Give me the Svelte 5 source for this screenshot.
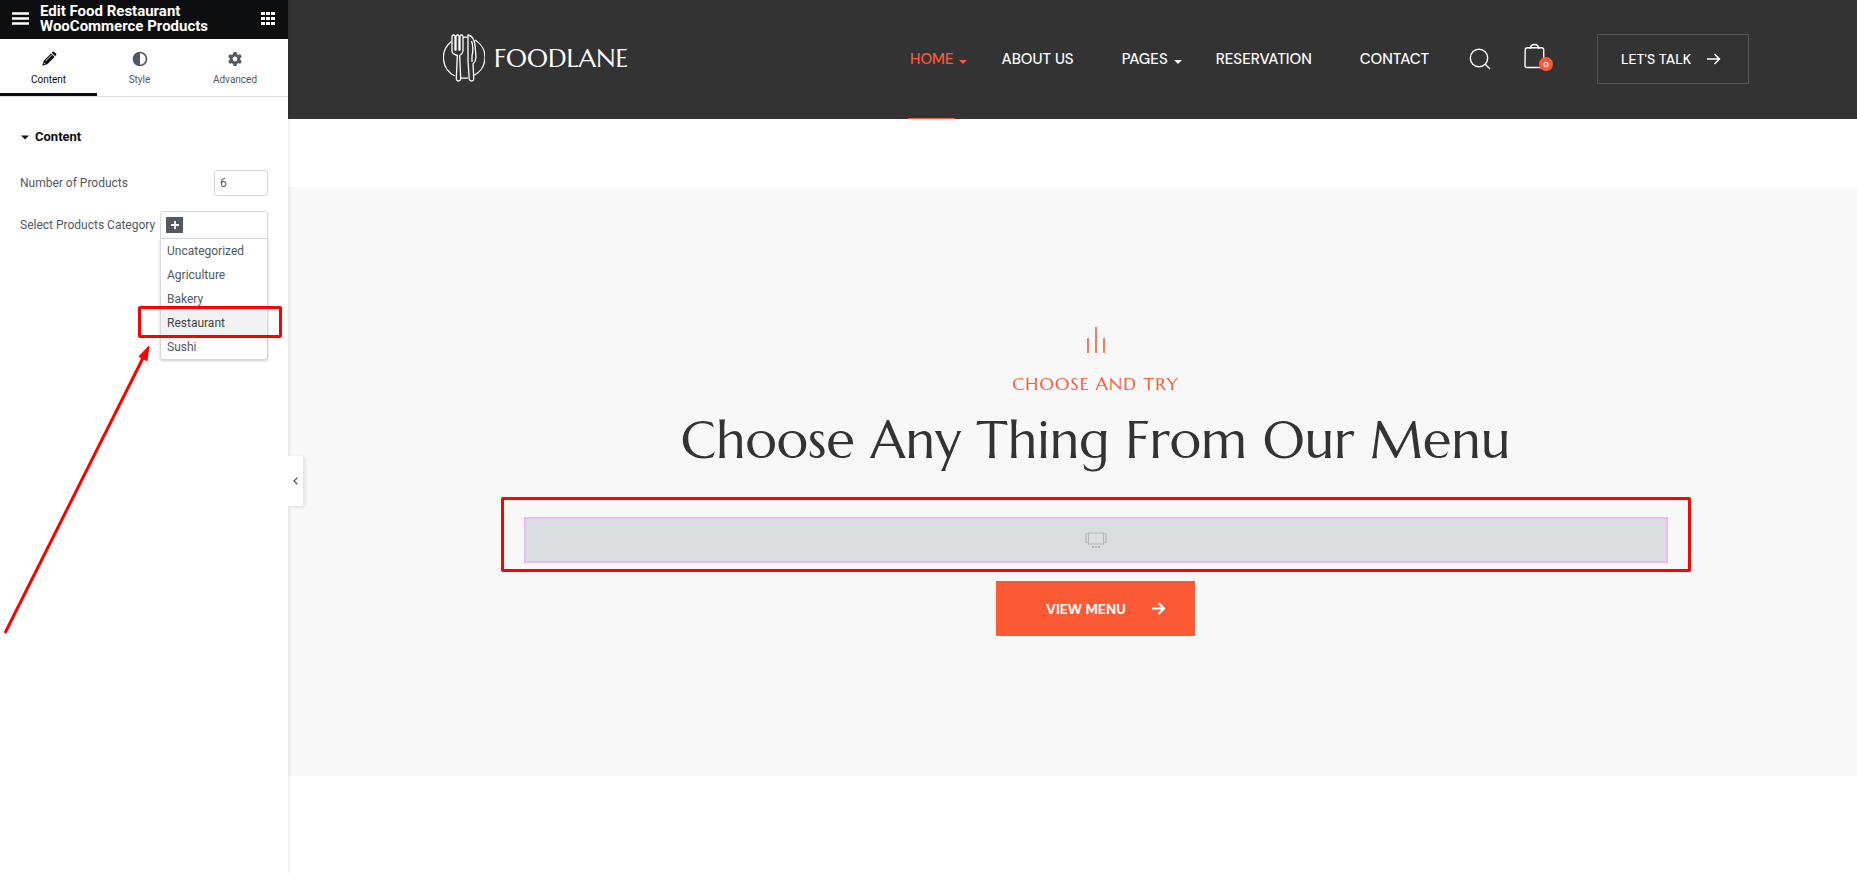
<script>
  const options = ['Uncategorized', 'Agriculture', 'Bakery', 'Restaurant', 'Sushi'];
  const links = [
    { label: 'HOME', menu: true, active: true },
    { label: 'ABOUT US' },
    { label: 'PAGES', menu: true },
    { label: 'RESERVATION' },
    { label: 'CONTACT' }
  ];
  let count = $state(6);
  let query = $state('');
  let chosen = $state('Restaurant');
</script>

<div class="editor">
  <aside class="panel">
    <header class="panel-head">
      <button class="bare" aria-label="Menu">
        <svg width="17" height="13" viewBox="0 0 17 13"><path d="M0 1.5h17M0 6.5h17M0 11.500h17" stroke="#fff" stroke-width="2.400" /></svg>
      </button>
      <h1>Edit Food Restaurant WooCommerce Products</h1>
      <button class="bare" aria-label="Widgets">
        <svg width="14" height="13" viewBox="0 0 14 13" fill="#fff"><path d="M0 0h4v3H0zM5 0h4v3H5zM10 0h4v3h-4zM0 5h4v3H0zM5 5h4v3H5zM10 5h4v3h-4zM0 10h4v3H0zM5 10h4v3H5zM10 10h4v3h-4z" /></svg>
      </button>
    </header>

    <nav class="tabs">
      <button class="tab on">
        <svg width="16" height="16" viewBox="0 0 16 16"><path d="M2.700 9.700 10 2.400 13.600 6 6.300 13.300 1.300 14.700z" fill="#0c0d0e" /><path d="M10.700 1.700 12 .7q.7-.4 1.300.2l1.800 1.800q.6.6.1 1.300l-1 1.200z" fill="#0c0d0e" /><path d="m4.600 10 6-6M2.800 11.600l1.700 1.700" stroke="#fff" stroke-width=".9" /></svg>
        Content
      </button>
      <button class="tab">
        <svg width="16" height="16" viewBox="0 0 16 16"><circle cx="8" cy="8" r="6.500" fill="none" stroke="#515962" stroke-width="1.700" /><path d="M8 1.500a6.500 6.500 0 0 0 0 13z" fill="#515962" /></svg>
        Style
      </button>
      <button class="tab">
        <svg width="16" height="16" viewBox="0 0 16 16"><g fill="#515962"><circle cx="8" cy="8" r="5.300" /><rect x="6.200" y="1" width="3.600" height="14" rx="1" /><rect x="6.200" y="1" width="3.600" height="14" rx="1" transform="rotate(60 8 8)" /><rect x="6.200" y="1" width="3.600" height="14" rx="1" transform="rotate(120 8 8)" /></g><circle cx="8" cy="8" r="2.400" fill="#fff" /></svg>
        Advanced
      </button>
    </nav>

    <section class="controls">
      <h2>
        <svg width="8" height="5" viewBox="0 0 8 5"><path d="M0 .5h8L4 4.500z" fill="#0c0d0e" /></svg>
        Content
      </h2>
      <div class="row">
        <label for="count">Number of Products</label>
        <input id="count" class="count" type="text" inputmode="numeric" bind:value={count} />
      </div>
      <div class="row">
        <label for="category">Select Products Category</label>
        <div class="picker">
          <button class="add" aria-label="Add category">
            <svg width="8" height="8" viewBox="0 0 8 8"><path d="M4 0v8M0 4h8" stroke="#fff" stroke-width="1.800" /></svg>
          </button>
          <input id="category" type="text" bind:value={query} />
          <ul class="options">
            {#each options as option}
              <li class:marked={option === 'Restaurant'}>
                <button class:chosen={option === chosen} onclick={() => (chosen = option)}>{option}</button>
              </li>
            {/each}
          </ul>
        </div>
      </div>
    </section>

    <svg class="pointer" width="150" height="292" viewBox="0 0 150 292"><path d="M5 289 143 14" stroke="#f00" stroke-width="3" /><path d="M149 2 139 12.500l8 4.200z" stroke="#f00" fill="#f00" /></svg>

    <button class="collapse" aria-label="Collapse panel">
      <svg width="5" height="8" viewBox="0 0 5 8"><path d="M4.300.8 1 4l3.300 3.200" fill="none" stroke="#515962" stroke-width="1.300" /></svg>
    </button>
  </aside>

  <main class="preview">
    <header class="site-head">
      <div class="wrap">
        <a class="logo" href="#home">
          <svg width="42" height="48" viewBox="0 0 42 48" fill="none" stroke="#fff" stroke-width="1.300" stroke-linejoin="round">
            <path d="M8.500 7.500A20.300 20.300 0 0 0 12 42M32 6a20.300 20.300 0 0 1-2 36M17 43.800q4 .8 8 0M20 3.300q2.500-.2 4.500 0" />
            <path d="M9 2q1.600-2 3 0v14h1V2q1.600-2 3 0v14h1V2q1.600-2 3 0v15q-.5 3-3.300 4.500l1 23.500q-.3 2-2.200 2t-2.200-2l1-23.500Q9 20 9 17z" />
            <path d="M25 1q6 1 7 10l1 12q0 4-3 7l.8 15q-.3 2-2.300 2t-2.300-2L25 27zM28.500 7q2.500 7 .5 15v6" />
          </svg>
          <span>FOODLANE</span>
        </a>
        <nav class="site-nav">
          {#each links as link}
            <a href="#{link.label.toLowerCase().replace(' ', '-')}" class:active={link.active} class:menu={link.menu}>
              {link.label}
              {#if link.menu}
                <svg width="8" height="4" viewBox="0 0 8 4"><path d="M0 0h8L4 4z" fill="currentColor" /></svg>
              {/if}
            </a>
          {/each}
        </nav>
        <button class="bare search" aria-label="Search">
          <svg width="22" height="22" viewBox="0 0 22 22" fill="none" stroke="#fff" stroke-width="1.400"><circle cx="10" cy="10" r="8.700" /><path d="m16 16 5 5" /></svg>
        </button>
        <button class="bare cart" aria-label="Cart">
          <svg width="21" height="26" viewBox="0 0 21 26" fill="none" stroke="#fff" stroke-width="1.400"><path d="M3.500 4.700h14q2.200 0 2.200 2.300v15.500q0 2-2 2H3q-2 0-2-2L1.200 7q.1-2.300 2.300-2.300zM6 6q.5-4.500 4.500-4.500T15 6" /></svg>
          <span>0</span>
        </button>
        <a class="talk" href="#talk">
          LET'S TALK
          <svg width="14" height="12" viewBox="0 0 14 12" fill="none" stroke="#fff" stroke-width="1.500"><path d="M0 6h12M7.500 1l5 5-5 5" /></svg>
        </a>
      </div>
    </header>

    <section class="choose">
      <svg width="18" height="26" viewBox="0 0 18 26"><path d="M1 11v15M9 0v26M17 11v15" stroke="#fc5a34" stroke-width="1.600" /></svg>
      <p class="eyebrow">CHOOSE AND TRY</p>
      <h2>Choose Any Thing From Our Menu</h2>
      <div class="outline">
        <div class="placeholder">
          <svg width="22" height="17" viewBox="0 0 22 17" fill="none" stroke="#b4b8bb" stroke-width="1.200"><path d="M3.500 1h15v11h-15zM3.500 2H1v8.500h2.500M18.500 2H21v8.500h-2.500" /><path d="M7 15h2m1 0h2m1 0h2" stroke-width="2" /></svg>
        </div>
      </div>
      <a class="view" href="#menu">
        VIEW MENU
        <svg width="14" height="13" viewBox="0 0 14 13" fill="none" stroke="#fff" stroke-width="2.200"><path d="M0 6.500h12M6.500 1 12 6.500 6.500 12" /></svg>
      </a>
    </section>
  </main>
</div>

<style>
  :global(body) { margin: 0; background: #fff; }
  .editor { display: flex; min-height: 100vh; font-family: Roboto, sans-serif; color: #515962; }
  .editor * { box-sizing: border-box; }
  a { text-decoration: none; color: inherit; }
  svg { display: block; flex: none; }
  button { font: inherit; color: inherit; cursor: pointer; }
  .bare { padding: 0; border: 0; background: none; }

  .panel { position: relative; z-index: 2; flex: none; width: 288px; background: #fff; box-shadow: 0 0 4px rgba(0, 0, 0, 0.16); }
  .panel-head { display: flex; align-items: center; gap: 11px; height: 39px; padding: 0 13px 2px 12px; background: #0c0d0e; }
  .panel-head h1 { flex: 1; margin: 0; padding-right: 40px; font-size: 15px; line-height: 15px; font-weight: 700; color: #fff; }

  .tabs { display: grid; grid-template-columns: 97fr 85fr 106fr; height: 58px; border-bottom: 1px solid #e0e2e5; }
  .tab { display: flex; flex-direction: column; align-items: center; gap: 6px; padding: 12px 0 0; border: 0; border-bottom: 3px solid transparent; background: none; font-size: 10px; line-height: 14px; }
  .tab.on { border-color: #0c0d0e; color: #0c0d0e; }

  .controls { padding: 30px 20px; font-size: 12px; }
  .controls h2 { display: flex; align-items: center; gap: 6px; margin: 0 0 23px 1px; font-size: 13px; line-height: 20px; font-weight: 700; color: #0c0d0e; }
  .row { display: flex; align-items: center; justify-content: space-between; margin-bottom: 15px; }
  .row label { white-space: nowrap; }
  input { min-width: 0; font: inherit; color: inherit; background: none; outline: 0; }
  .count { width: 54px; height: 26px; padding: 0 5px; border: 1px solid #d5d8dc; border-radius: 3px; }
  .picker { position: relative; display: flex; align-items: center; width: 108px; height: 28px; padding: 0 5px; border: 1px solid #d5d8dc; border-radius: 3px 3px 0 0; }
  .picker input { flex: 1; border: 0; }
  .add { display: grid; place-items: center; flex: none; width: 17px; height: 16px; padding: 0; border: 0; background: #515962; }
  .options { position: absolute; top: 26px; left: -1px; right: -1px; margin: 0; padding: 0; list-style: none; background: #fff; border: 1px solid #d5d8dc; border-radius: 0 0 3px 3px; box-shadow: 0 1px 3px rgba(0, 0, 0, 0.2); }
  .options li { position: relative; }
  .options button { display: block; width: 100%; height: 24px; padding: 0 6px; border: 0; background: none; text-align: left; }
  .options .chosen { background: #f1f2f3; color: #3f444b; }
  .marked::after { content: ''; position: absolute; inset: -5px -15px -3px -23px; border: 3px solid #f00; border-radius: 2px; pointer-events: none; }
  .pointer { position: absolute; top: 344px; left: 0; pointer-events: none; }
  .collapse { position: absolute; top: 456px; left: 100%; display: grid; place-items: center; width: 15px; height: 50px; padding: 0; border: 0; background: #fff; box-shadow: 2px 1px 3px rgba(0, 0, 0, 0.1); }

  .preview { flex: 1; min-width: 0; font-family: 'DM Sans', Inter, sans-serif; }
  .site-head { padding-left: 47px; background: #333; color: #fff; }
  .wrap { display: flex; align-items: center; max-width: 1306px; height: 119px; margin: 0 auto; padding-bottom: 1px; }
  .logo { display: flex; align-items: center; gap: 9px; margin-right: auto; padding-bottom: 2px; font-family: Marcellus, Lato, sans-serif; font-size: 26px; line-height: 32px; }
  .site-nav { display: flex; align-self: flex-start; gap: 48px; margin-right: 40px; font-size: 15px; line-height: 119px; font-weight: 500; }
  .site-nav a { position: relative; display: flex; align-items: center; gap: 6px; white-space: nowrap; }
  .site-nav .menu { margin-right: -14px; }
  .site-nav svg { margin-top: 4px; }
  .site-nav .active { color: #fc5a34; }
  .site-nav .active::after { content: ''; position: absolute; bottom: 0; left: -2px; right: 12px; height: 1px; background: #fc5a34; }
  .search { margin-right: 33px; }
  .cart { position: relative; margin-right: 52px; padding-bottom: 6px; }
  .cart span { position: absolute; right: -8px; bottom: 4px; width: 14px; height: 14px; border-radius: 50%; background: #fc5a34; color: #fff; font-size: 8px; line-height: 14px; font-weight: 600; text-align: center; }
  .talk { display: flex; align-items: center; justify-content: space-between; width: 152px; height: 50px; padding: 0 27px 0 23px; border: 1px solid #555; font-size: 14px; font-weight: 500; white-space: nowrap; }

  .choose { display: flex; flex-direction: column; align-items: center; margin-top: 68px; padding: 140px 0 140px 46px; background: #f8f8f8; }
  .eyebrow { margin: 18px 0 0; font-family: Marcellus, Lato, sans-serif; font-size: 18px; line-height: 26px; letter-spacing: 1px; color: #fc5a34; }
  .choose h2 { margin: 9px 0 23px; font-family: Marcellus, Lato, sans-serif; font-size: 52px; line-height: 68px; font-weight: 400; color: #333; white-space: nowrap; }
  .outline { width: 80%; max-width: 1190px; padding: 17px 20px 6px; border: 3px solid #f00; border-radius: 2px; }
  .placeholder { display: grid; place-items: center; height: 46px; border: 2px solid #f1b7fb; background: #dadee0; }
  .view { display: flex; align-items: center; justify-content: space-between; width: 199px; height: 55px; margin-top: 9px; padding: 0 29px 0 50px; background: #fc5a34; color: #fff; font-size: 14px; font-weight: 700; white-space: nowrap; }
</style>
